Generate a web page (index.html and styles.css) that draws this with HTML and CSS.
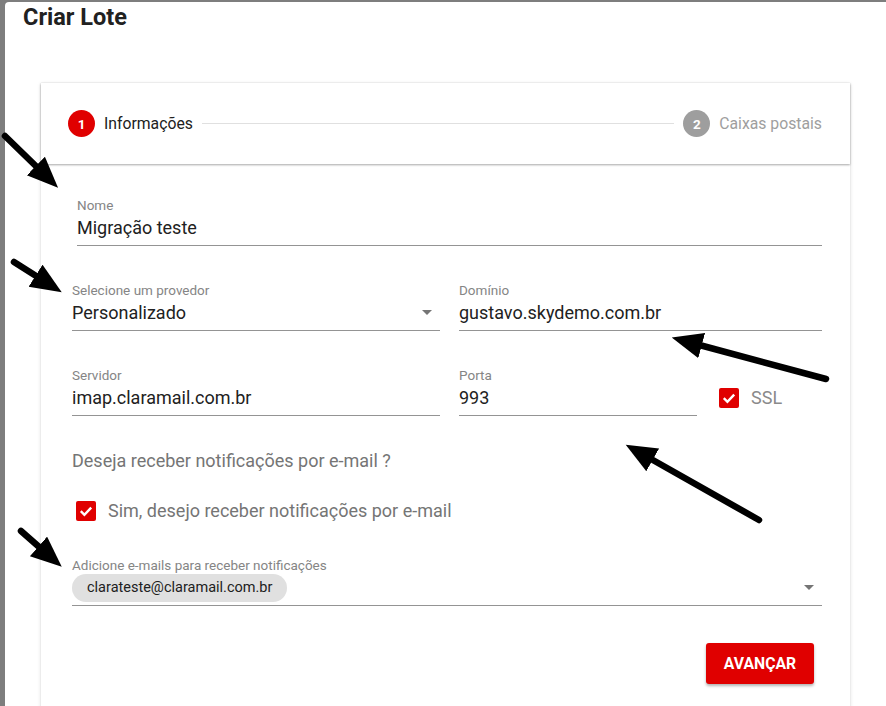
FILE: index.html
```html
<!DOCTYPE html>
<html lang="pt-BR">
<head>
  <meta charset="UTF-8" />
  <meta name="viewport" content="width=device-width, initial-scale=1.0"/>
  <title>Criar Lote</title>
  <link rel="stylesheet" href="styles.css">
</head>
<body>

  <div class="dialog">
    <h2 class="dialog-title">Criar Lote</h2>

    <div class="card">
      <div class="stepper">
        <div class="step active">
          <span class="step-icon">1</span>
          <span class="step-label">Informações</span>
        </div>
        <div class="step-line"></div>
        <div class="step">
          <span class="step-icon">2</span>
          <span class="step-label">Caixas postais</span>
        </div>
      </div>

      <form class="card-body">
        <div class="field field-nome">
          <label for="nome">Nome</label>
          <input id="nome" type="text" value="Migração teste" />
        </div>

        <div class="row">
          <div class="field">
            <label>Selecione um provedor</label>
            <div class="select">
              <span>Personalizado</span>
              <span class="caret"></span>
            </div>
          </div>
          <div class="field">
            <label for="dominio">Domínio</label>
            <input id="dominio" type="text" value="gustavo.skydemo.com.br" />
          </div>
        </div>

        <div class="row">
          <div class="field">
            <label for="servidor">Servidor</label>
            <input id="servidor" type="text" value="imap.claramail.com.br" />
          </div>
          <div class="port-group">
            <div class="field port">
              <label for="porta">Porta</label>
              <input id="porta" type="text" value="993" />
            </div>
            <div class="checkbox ssl">
              <span class="box">
                <svg width="20" height="20" viewBox="0 0 20 20"><path d="M4.8 10.2 L8.4 13.8 L15.2 6.6" fill="none" stroke="#fff" stroke-width="2.4"/></svg>
              </span>
              <span class="check-label">SSL</span>
            </div>
          </div>
        </div>

        <p class="question">Deseja receber notificações por e-mail ?</p>

        <div class="checkbox notify">
          <span class="box">
            <svg width="20" height="20" viewBox="0 0 20 20"><path d="M4.8 10.2 L8.4 13.8 L15.2 6.6" fill="none" stroke="#fff" stroke-width="2.4"/></svg>
          </span>
          <span class="check-label">Sim, desejo receber notificações por e-mail</span>
        </div>

        <div class="field">
          <label>Adicione e-mails para receber notificações</label>
          <div class="select chips">
            <span class="chip">clarateste@claramail.com.br</span>
            <span class="caret"></span>
          </div>
        </div>

        <div class="actions">
          <button type="button" class="btn-primary">Avançar</button>
        </div>
      </form>
    </div>
  </div>

  <!-- setas de anotação do print -->
  <svg class="annotations" width="886" height="706" viewBox="0 0 886 706">
    <defs>
      <marker id="head" markerUnits="userSpaceOnUse" markerWidth="34" markerHeight="28" refX="10" refY="13" orient="auto">
        <path d="M0,0 L31,13 L0,26 z" fill="#000"/>
      </marker>
    </defs>
    <g stroke="#000" stroke-width="6.5" stroke-linecap="round" marker-end="url(#head)">
      <line x1="5" y1="136" x2="43" y2="173"/>
      <line x1="14" y1="262" x2="44" y2="281"/>
      <line x1="826" y1="379" x2="692" y2="343"/>
      <line x1="759" y1="520" x2="644" y2="455"/>
      <line x1="21" y1="531" x2="46" y2="553"/>
    </g>
  </svg>

</body>
</html>
```

FILE: styles.css
```css
html, body {
  margin: 0;
  height: 100%;
}

body {
  font-family: Roboto, "Noto Sans", sans-serif;
  background: #7e7e7e;
  overflow: hidden;
  position: relative;
}

.dialog {
  margin: 2px 0 0 5px;
  height: calc(100% - 2px);
  background: #fff;
  border-radius: 4px 0 0 0;
}

.dialog-title {
  margin: 0;
  padding: 1px 18px 0;
  font-size: 23.5px;
  line-height: 28px;
  font-weight: 700;
  color: #212121;
}

.card {
  margin: 52px 0 0 36px;
  width: 809px;
  height: 640px;
  background: #fff;
  box-shadow: 0 1px 4px rgba(0, 0, 0, 0.14), 0 0 1px rgba(0, 0, 0, 0.12);
}

/* stepper */

.stepper {
  height: 81px;
  display: flex;
  align-items: center;
  padding: 0 28px 0 27px;
  position: relative;
  z-index: 1;
  box-shadow: 0 1px 2px rgba(0, 0, 0, 0.35);
}

.step {
  display: flex;
  align-items: center;
  gap: 9px;
}

.step-icon {
  width: 27px;
  height: 27px;
  border-radius: 50%;
  background: #9e9e9e;
  color: #fff;
  font-size: 13.5px;
  font-weight: 700;
  display: flex;
  align-items: center;
  justify-content: center;
}

.step-label {
  font-size: 15.75px;
  color: #9e9e9e;
}

.step.active .step-icon {
  background: #e00000;
}

.step.active .step-label {
  color: #212121;
}

.step-line {
  flex: 1;
  height: 1px;
  background: #e0e0e0;
  margin: 0 9px;
}

/* formulario */

.card-body {
  padding: 34px 28px 20px 31px;
}

.field {
  display: flex;
  flex-direction: column;
}

.field label {
  font-size: 13.5px;
  line-height: 14px;
  color: #858585;
}

.field input,
.select {
  box-sizing: border-box;
  height: 34px;
  padding: 0 0 3px;
  border: none;
  border-bottom: 1px solid #949494;
  font-family: inherit;
  font-size: 18px;
  color: #212121;
  background: transparent;
  outline: none;
  width: 100%;
}

.field-nome {
  margin-left: 5px;
}

.select {
  display: flex;
  align-items: center;
  justify-content: space-between;
}

.caret {
  width: 0;
  height: 0;
  border-left: 5.5px solid transparent;
  border-right: 5.5px solid transparent;
  border-top: 5.5px solid #757575;
  margin-right: 8px;
}

.row {
  display: grid;
  grid-template-columns: 368px 1fr;
  column-gap: 19px;
  margin-top: 37px;
}

.port-group {
  display: flex;
  align-items: flex-start;
}

.port {
  width: 238px;
}

.checkbox {
  display: flex;
  align-items: center;
  gap: 12px;
}

.box {
  width: 20px;
  height: 20px;
  border-radius: 2px;
  background: #e00000;
  display: flex;
}

.check-label {
  font-size: 18px;
  color: #757575;
}

.ssl {
  margin: 19px 0 0 22px;
}

.ssl .check-label {
  color: #8a8a8a;
}

.question {
  margin: 33px 0 0;
  font-size: 18px;
  line-height: 24px;
  color: #757575;
}

.notify {
  margin: 27px 0 37px 4px;
}

.chips {
  padding-bottom: 2px;
}

.chip {
  height: 28px;
  line-height: 28px;
  padding: 0 15px;
  border-radius: 14px;
  background: #e0e0e0;
  font-size: 14.5px;
  color: #212121;
}

.actions {
  display: flex;
  justify-content: flex-end;
  margin-top: 37px;
  padding-right: 8px;
}

.btn-primary {
  width: 108px;
  height: 41px;
  border: none;
  border-radius: 3px;
  background: #e00000;
  color: #fff;
  font-family: inherit;
  font-size: 15.75px;
  font-weight: 700;
  text-transform: uppercase;
  box-shadow: 0 2px 3px rgba(0, 0, 0, 0.3);
  cursor: pointer;
}

.annotations {
  position: absolute;
  top: 0;
  left: 0;
  pointer-events: none;
}
```
